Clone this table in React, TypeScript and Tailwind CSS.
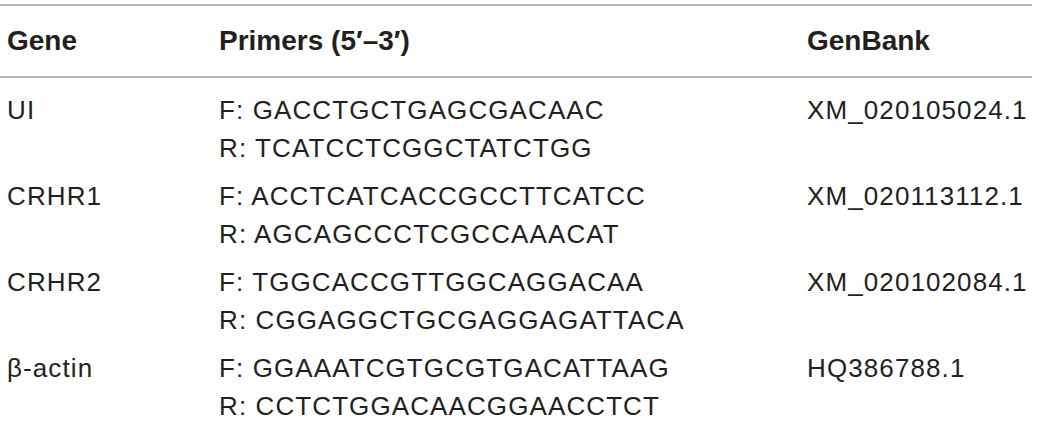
const rows = [
  { gene: "UI", f: "GACCTGCTGAGCGACAAC", r: "TCATCCTCGGCTATCTGG", bank: "XM_020105024.1" },
  { gene: "CRHR1", f: "ACCTCATCACCGCCTTCATCC", r: "AGCAGCCCTCGCCAAACAT", bank: "XM_020113112.1" },
  { gene: "CRHR2", f: "TGGCACCGTTGGCAGGACAA", r: "CGGAGGCTGCGAGGAGATTACA", bank: "XM_020102084.1" },
  { gene: "β-actin", f: "GGAAATCGTGCGTGACATTAAG", r: "CCTCTGGACAACGGAACCTCT", bank: "HQ386788.1" },
];

export default function App() {
  return (
    <div className="w-[1039px] h-[428px] bg-white pt-[4px] pr-[7px] text-[#231f20] font-['Liberation_Sans',Arial,sans-serif]">
      {/* Header */}
      <div className="grid grid-cols-[219px_588px_1fr] border-y-2 border-[#b8b8b8] h-[74px] items-center text-[28px] font-bold">
        <div className="pl-[7px]">Gene</div>
        <div>Primers (5′–3′)</div>
        <div>GenBank</div>
      </div>

      {/* Body */}
      <div className="pt-[3px] text-[26px] tracking-[1.1px] leading-[38px]">
        {rows.map((row) => (
          <div key={row.gene} className="grid grid-cols-[219px_588px_1fr] pt-[10px]">
            <div className="pl-[7px]">{row.gene}</div>
            <div>
              <div>F: {row.f}</div>
              <div>R: {row.r}</div>
            </div>
            <div>{row.bank}</div>
          </div>
        ))}
      </div>
    </div>
  );
}
